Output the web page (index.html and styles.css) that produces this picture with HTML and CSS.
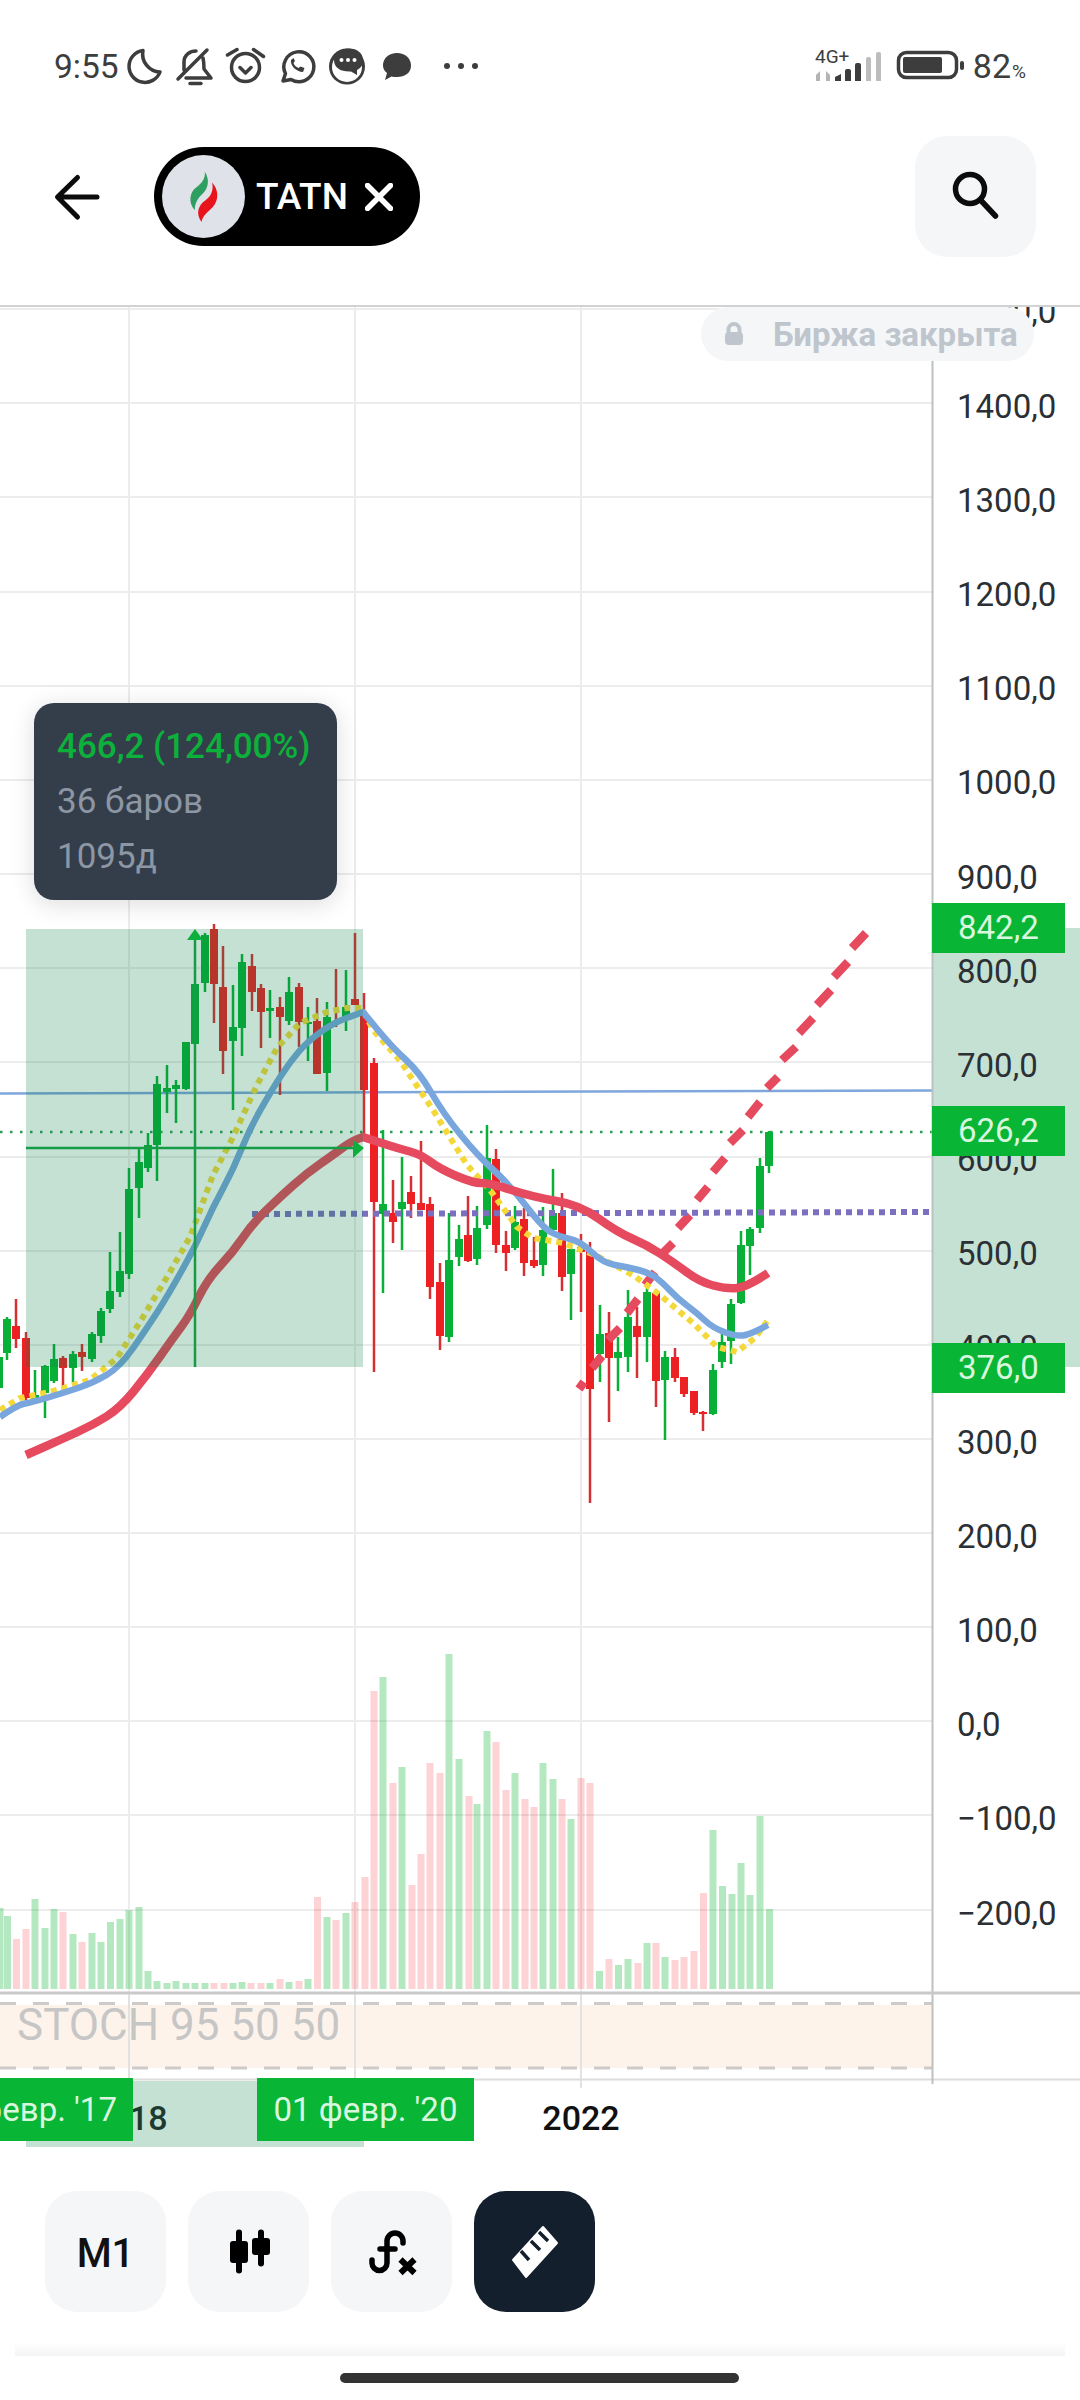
FILE: index.html
```html
<!DOCTYPE html>
<html lang="ru">
<head>
<meta charset="utf-8">
<title>TATN</title>
<link rel="stylesheet" href="styles.css">
</head>
<body>
<div class="status">
  <div class="status-left">
    <span class="time">9:55</span>
    <svg class="si si-moon" viewBox="120 44 50 44"><path class="ln" d="M143 50.500A16 16 0 1 0 160 72A18 18 0 0 1 143 50.500Z"/></svg>
    <svg class="si si-bell" viewBox="170 44 50 44"><path class="ln" d="M184 70V62C184 55 190 51 196 51M203 58C204 62 204 66 204 69L211 78H186M207 50L178 79M190 83.500H201"/></svg>
    <svg class="si si-alarm" viewBox="220 44 53 44"><circle class="ln" cx="245.500" cy="67.500" r="14"/><path class="ln" d="M227.500 55L237 49.500M253.500 49.500L263.500 56.500M240 67.500L245.500 73L251 67.500"/></svg>
    <svg class="si si-wa" viewBox="273 44 48 44"><path class="ln" d="M283 81L285.500 73.500A15 15 0 1 1 291 79.500Z"/><path class="fl" d="M291 60C290 65 296 72 303 72L304.500 68L300.500 66.500L298.500 68C296 67 294 65 293.500 63L295 61L293.500 58Z"/></svg>
    <svg class="si si-chat" viewBox="321 44 53 44"><circle class="fl" cx="347" cy="66.500" r="18"/><circle class="wh" cx="347" cy="67" r="15"/><path class="fl" d="M334 60C334 53 341 48.500 349 48.500C357 48.500 363 53 363 60C363 65 361 68 357 70L357 75L351 71.500C341 72 334 68 334 60Z"/><circle class="wh" cx="341.500" cy="60" r="2"/><circle class="wh" cx="348" cy="60" r="2"/><circle class="wh" cx="354.500" cy="60" r="2"/></svg>
    <svg class="si si-bubble" viewBox="374 44 54 44"><path class="fl" d="M397 53C405 53 411 58 411 65.500C411 73 405 77 397 77C395 77 393 77 391.500 76.500L385 80L387 73C384.500 71 383 68.500 383 65.500C383 58 389 53 397 53Z"/></svg>
    <svg class="si si-dots" viewBox="428 44 62 44"><circle class="fl" cx="447" cy="66" r="3"/><circle class="fl" cx="461" cy="66" r="3"/><circle class="fl" cx="475" cy="66" r="3"/></svg>
  </div>
  <div class="status-right">
    <svg class="si si-signal" viewBox="814 44 72 44">
      <text class="net" x="816" y="63">4G+</text>
      <path class="gr" d="M817 75L821 71V81H817ZM827 71L831 75L831 81H827Z"/>
      <path class="fl" d="M836 81V77L842 74V81ZM846 81V71Q846 69 848 69H850Q852 69 852 71V81ZM856 81V65Q856 63 858 63H860Q862 63 862 65V81Z"/>
      <path class="gr2" d="M867 81V59Q867 57 869 57H870Q872 57 872 59V81ZM877 81V54Q877 52 879 52H880Q882 52 882 54V81Z"/>
    </svg>
    <svg class="si si-batt" viewBox="896 44 72 44"><rect class="ln" x="899.500" y="52.500" width="58" height="25" rx="8"/><rect class="fl" x="904" y="57" width="39" height="16" rx="2"/><rect class="fl" x="961" y="61" width="4" height="9" rx="2"/></svg>
    <span class="pct">82<small>%</small></span>
  </div>
</div>

<header class="header">
  <svg class="back" viewBox="50 170 50 50"><path d="M97 195H58M77.500 175.500L57.500 195L77.500 215"/></svg>
  <div class="pill">
    <span class="logo">
      <svg viewBox="0 0 248 248"><path class="flame-g" d="M128 50C130 72 118 85 102 97C82 112 78 142 98 165C98 142 108 128 122 115C140 98 142 72 128 50Z"/><path class="flame-r" d="M150 82C154 105 148 122 130 135C108 150 100 175 118 200C122 178 140 168 152 155C170 135 170 105 150 82Z"/></svg>
    </span>
    <span class="ticker">TATN</span>
    <svg class="close" viewBox="0 0 28 28"><path d="M2.500 2.500L25.500 25.500M25.500 2.500L2.500 25.500"/></svg>
  </div>
  <button class="square search" type="button">
    <svg viewBox="915 136 121 121"><circle cx="970" cy="189" r="14.500"/><path d="M980.500 200L995.500 216"/></svg>
  </button>
</header>

<main class="chart">
  <svg class="plot" viewBox="0 305 1080 1842">
    <path class="grid" d="M0 309H932M0 403H932M0 497H932M0 592H932M0 686H932M0 780H932M0 874H932M0 968H932M0 1062H932M0 1157H932M0 1251H932M0 1345H932M0 1439H932M0 1533H932M0 1627H932M0 1721H932M0 1815H932M0 1910H932"/>
    <path class="grid" d="M129 305V2080M355 305V2080M581 305V2088"/>
    <rect class="stoch-band" x="0" y="2005" width="932" height="63"/>
    <path class="stoch-dash" d="M0 2003.500H932M0 2068H932"/>
    <path class="grid-v" d="M129 1995V2080M355 1995V2080M581 1995V2088"/>
    <path class="time-line" d="M0 2079.500H1080"/>
    <path class="vol-g" d="M0 1908V1989M7.500 1916V1989M35 1899V1989M45 1928V1989M54 1909V1989M73 1934V1989M92 1933V1989M101 1942V1989M110.500 1922V1989M120 1919V1989M129 1910V1989M139 1907V1989M148 1971V1989M157 1981V1989M167 1983V1989M176 1981V1989M186 1983V1989M195 1983V1989M205 1983V1989M233 1983V1989M242 1982V1989M270 1983V1989M289 1982V1989M308 1979V1989M327 1917V1989M346 1913V1989M383 1677V1989M402 1767V1989M449 1654V1989M459 1759V1989M477 1804V1989M487 1731V1989M515 1773V1989M543 1763V1989M553 1779V1989M571 1819V1989M599.500 1971V1989M618.500 1965V1989M628 1959V1989M647 1943V1989M665 1957V1989M713 1830V1989M722.500 1886V1989M732 1894V1989M741 1863V1989M750 1895V1989M760 1816V1989M769.500 1909V1989"/>
    <path class="vol-r" d="M16.500 1939V1989M26 1929V1989M63 1912V1989M82 1942V1989M214 1983V1989M224 1983V1989M251 1983V1989M261 1983V1989M280 1979V1989M299 1981V1989M317.500 1897V1989M336 1920V1989M355 1902V1989M365 1877V1989M374 1691V1989M393 1783V1989M412 1885V1989M421 1854V1989M430 1763V1989M440 1773V1989M469 1796V1989M496 1742V1989M506 1790V1989M525 1799V1989M534 1807V1989M562 1799V1989M581 1778V1989M590 1783V1989M609 1959V1989M638 1963V1989M656 1943V1989M675 1960V1989M684 1957V1989M694 1951V1989M703.500 1893V1989"/>
    <path class="price-line" d="M0 1093.500L932 1090.500"/>
    <path class="close-dots" d="M0 1132H932"/>
    <path class="wick-g" d="M7 1317V1360M35 1370V1400M45 1365V1418M54 1344V1383M73 1351V1382M92 1332V1362M101 1308V1343M110 1252V1313M120 1232V1297M129 1168V1279M139 1148V1218M148 1133V1172M157 1076V1181M167 1065V1113M176 1080V1123M186 1042V1090M205 933V992M233 985V1110M242 954V1056M270 990V1038M289 977V1025M308 1007V1061M327 1002V1091M346 970V1031M383 1130V1293M402 1157V1250M449 1213V1342M459 1225V1266M477 1206V1265M487 1125V1229M515 1206V1250M543 1207V1276M553 1169V1230M571 1245V1320M600 1305V1382M618 1337V1391M628 1290V1372M647 1287V1362M665 1351V1440M713 1364V1415M722 1328V1368M731 1299V1364M741 1231V1304M750 1227V1275M760 1158V1233M769 1131V1173"/>
    <path class="body-g" d="M-1 1357V1388M7 1319V1353M35 1395V1400M45 1366V1393M54 1359V1381M73 1354V1368M92 1334V1359M101 1311V1336M110 1291V1309M120 1271V1292M129 1189V1274M139 1162V1188M148 1145V1168M157 1084V1145M167 1088V1092M176 1085V1089M186 1042V1089M195 984V1044M205 935V983M233 1027V1041M242 962V1028M270 1008V1011M289 992V1021M308 1022V1024M327 1017V1073M346 1007V1017M383 1204V1214M402 1202V1209M449 1260V1337M459 1239V1257M477 1228V1259M487 1158V1225M515 1222V1248M543 1230V1265M553 1213V1230M571 1249V1274M600 1334V1354M618 1352V1358M628 1317V1357M647 1292V1337M665 1357V1380M713 1370V1414M722 1342V1362M731 1304V1341M741 1245V1303M750 1229V1246M760 1166V1228M769 1132V1166"/>
    <path class="wick-r" d="M16 1299V1348M26 1332V1400M63 1356V1390M82 1344V1371M214 924V1023M223 946V1074M252 954V1011M261 984V1048M280 997V1095M299 983V1047M317 998V1074M336 969V1027M355 933V1005M364 993V1137M374 1058V1372M393 1180V1243M411 1176V1218M421 1141V1210M430 1197V1299M440 1263V1350M468 1196V1262M496 1149V1253M506 1231V1271M524 1208V1276M534 1237V1268M562 1193V1291M581 1234V1312M590 1242V1503M609 1312V1422M637 1307V1378M656 1290V1407M675 1348V1382M684 1377V1397M694 1391V1415M703 1411V1431"/>
    <path class="body-r" d="M16 1326V1339M26 1338V1398M63 1358V1368M82 1352V1357M214 929V984M223 987V1051M252 966V992M261 988V1012M280 1007V1017M299 987V1022M317 1021V1074M355 999V1005M364 1013V1090M374 1063V1202M393 1213V1222M411 1192V1204M421 1203V1210M430 1204V1287M440 1282V1336M468 1235V1261M496 1159V1245M506 1245V1253M524 1219V1263M534 1260V1266M562 1213V1277M581 1247V1252M590 1250V1389M609 1333V1358M637 1326V1337M656 1293V1381M675 1357V1378M684 1377V1394M694 1391V1413M703 1412V1414"/>
    <path class="trend" d="M578 1383L585 1388M592 1368L602 1356M608 1340L620 1328M627 1313L638 1299M645 1285L655 1272M663 1253L673 1243M678 1228L690 1215M697 1200L708 1187M713 1172L725 1158M730 1143L743 1130M748 1117L760 1102M767 1088L778 1077M782 1060L796 1047M799 1033L813 1018M817 1005L831 990M834 977L848 962M852 948L866 933"/>
    <path class="level" d="M252 1214L930 1212"/>
    <path class="ma-y" d="M0 1410L20 1398L50 1392L90 1380L117 1358L140 1322L167 1277L190 1237L213 1175L233 1137L257 1085L277 1048L300 1023L327 1012L347 1008L362 1008L373 1030L397 1057L403 1065L433 1110L467 1165L490 1190L517 1227L533 1238L563 1243L595 1255L633 1275L660 1295L693 1323L717 1347L737 1352L755 1338L768 1320"/>
    <path class="ma-b" d="M0 1417Q17 1405 25 1403.500Q33 1402 48 1397.500Q63 1393 78 1388Q93 1383 106.500 1375Q120 1367 133.500 1347.500Q147 1328 157 1312.500Q167 1297 181 1272Q195 1247 204 1227Q213 1207 223 1188.500Q233 1170 241.500 1149Q250 1128 261.500 1108Q273 1088 281.500 1075Q290 1062 298.500 1052Q307 1042 320 1032.500Q333 1023 346.500 1018Q360 1013 363 1012L377.500 1029.500Q392 1047 406 1060Q420 1073 431.500 1093Q443 1113 460 1134Q477 1155 493.500 1170Q510 1185 526.500 1206.500Q543 1228 551.500 1232.500Q560 1237 570 1239Q580 1241 591.500 1252Q603 1263 615 1265Q627 1267 638.500 1270Q650 1273 656.500 1278Q663 1283 670 1290.500Q677 1298 687 1305.500Q697 1313 705 1320.500Q713 1328 725.500 1332.500Q738 1337 745.500 1335Q753 1333 768 1325"/>
    <path class="ma-r" d="M26 1455L43 1447.500Q60 1440 76.500 1432.500Q93 1425 106.500 1416.500Q120 1408 133.500 1391.500Q147 1375 160 1356.500Q173 1338 181.500 1326.500Q190 1315 198.500 1297.500Q207 1280 220 1266Q233 1252 243 1237.500Q253 1223 266.500 1210Q280 1197 293.500 1185Q307 1173 320 1164Q333 1155 343 1147.500Q353 1140 363 1137L381.500 1143Q400 1149 410 1151.500Q420 1154 430 1161.500Q440 1169 456.500 1176Q473 1183 481.500 1183Q490 1183 511.500 1190Q533 1197 556.500 1201Q580 1205 598.500 1218.500Q617 1232 632 1238.500Q647 1245 660 1253.500Q673 1262 686.500 1272Q700 1282 713.500 1285.500Q727 1289 737 1288Q747 1287 768 1273"/>
    <rect class="zone" x="26" y="929" width="337" height="438"/>
    <rect class="zone" x="932" y="928" width="148" height="439"/>
    <rect class="zone" x="26" y="2081" width="338" height="66"/>
    <path class="axis" d="M932.500 305V2084"/>
    <path class="sep" d="M0 1993H1080"/>
    <path class="meas" d="M26 1148H358M195 936V1367"/>
    <path class="meas-head" d="M353 1140L364 1148L353 1158ZM187 940L195 929L203 940Z"/>
  </svg>

  <div class="axis-labels">
    <span>1500,0</span><span>1400,0</span><span>1300,0</span><span>1200,0</span><span>1100,0</span><span>1000,0</span>
    <span>900,0</span><span>800,0</span><span>700,0</span><span>600,0</span><span>500,0</span><span>400,0</span>
    <span>300,0</span><span>200,0</span><span>100,0</span><span>0,0</span><span>−100,0</span><span>−200,0</span>
  </div>
  <span class="tag tag-high">842,2</span>
  <span class="tag tag-last">626,2</span>
  <span class="tag tag-low">376,0</span>

  <div class="closed">
    <svg viewBox="0 0 22 24"><path d="M5.500 11V7.500A5.500 5.500 0 0 1 16.500 7.500V11"/><rect x="2" y="10" width="18" height="13" rx="4"/></svg>
    <span>Биржа закрыта</span>
  </div>

  <div class="tip">
    <div class="tip-main">466,2 (124,00%)</div>
    <div>36 баров</div>
    <div>1095д</div>
  </div>

  <span class="stoch">STOCH 95 50 50</span>
  <span class="year year-18">2018</span>
  <span class="year year-22">2022</span>
  <span class="date date-from">01 февр. '17</span>
  <span class="date date-to">01 февр. '20</span>
</main>

<nav class="toolbar">
  <button class="square m1" type="button">M1</button>
  <button class="square" type="button">
    <svg viewBox="186 2191 121 121"><path class="c-wick" d="M237 2232.500V2270.500M259 2232.500V2263.500"/><rect class="c-body" x="228" y="2241" width="18" height="22" rx="3"/><rect class="c-body" x="250" y="2238" width="18" height="17" rx="3"/></svg>
  </button>
  <button class="square" type="button">
    <svg viewBox="329 2191 121 121"><path class="fx" d="M401 2243V2241A8 8 0 0 0 385 2241V2263A7.500 7.500 0 0 1 370 2263V2260M378 2249H393"/><path class="fx-x" d="M398.500 2259.500L412.500 2273M412.500 2259.500L398.500 2273"/></svg>
  </button>
  <button class="square active" type="button">
    <svg viewBox="473 2191 121 121"><path class="ruler" d="M512 2260L542 2227L556 2243L525 2277Z"/><path class="ruler-cut" d="M520 2251L528 2260M530 2241L539 2250M538 2232L547 2241"/></svg>
  </button>
</nav>

<footer class="bottom">
  <div class="fade"></div>
  <div class="home"></div>
</footer>
</body>
</html>
```
FILE: styles.css
```css
* { box-sizing: border-box; }
html, body { margin: 0; padding: 0; width: 1080px; height: 2400px; overflow: hidden; background: #fff; font-family: Roboto, "Noto Sans", sans-serif; color: #2b3035; }
svg { display: block; }

.status { height: 132px; padding: 0 54px; display: flex; align-items: center; justify-content: space-between; color: #3d3d3d; }
.status-left, .status-right { display: flex; align-items: center; }
.time { font-size: 33.5px; width: 66px; }
.si { height: 44px; }
.si-moon, .si-bell, .si-wa { width: 50px; }
.si-alarm, .si-chat { width: 53px; }
.si-wa { width: 48px; }
.si-bubble { width: 54px; }
.si-dots { width: 62px; }
.si-signal, .si-batt { width: 72px; }
.si-signal { margin-right: 10px; }
.si-batt { margin-right: 6px; }
.ln { fill: none; stroke: #3d3d3d; stroke-width: 3.5; stroke-linecap: round; stroke-linejoin: round; }
.fl { fill: #3d3d3d; }
.wh { fill: #fff; }
.gr { fill: #b4b4b4; }
.gr2 { fill: #bdbdbd; }
.net { font-size: 19px; fill: #3d3d3d; }
.pct { font-size: 34px; display: flex; align-items: baseline; }
.pct small { font-size: 19px; margin-left: 1px; }

.header { height: 173px; padding: 4px 44px 48px 55px; display: flex; align-items: center; box-shadow: 0 2px 0 #d2d2d2; position: relative; z-index: 2; background: #fff; }
.back { width: 50px; height: 50px; margin-left: -5px; }
.back path { fill: none; stroke: #0c0c0c; stroke-width: 5; stroke-linecap: round; stroke-linejoin: round; }
.pill { margin-left: 54px; width: 266px; height: 99px; border-radius: 50px; background: #000; padding-left: 8px; display: flex; align-items: center; color: #fff; }
.logo { width: 83px; height: 83px; border-radius: 50%; background: #dfe2e8; flex: none; }
.flame-g { fill: #2f9e61; }
.flame-r { fill: #e8141c; }
.ticker { font-size: 37px; font-weight: 500; margin-left: 11px; width: 109px; }
.close { width: 28px; height: 28px; }
.close path { fill: none; stroke: #fff; stroke-width: 5.5; stroke-linecap: round; }

.square { width: 121px; height: 121px; border-radius: 32px; border: 0; padding: 0; background: #f5f6f8; font: inherit; color: #111; flex: none; }
.square svg { width: 121px; height: 121px; }
.search { margin-left: auto; }
.search circle, .search path { fill: none; stroke: #0c0c0c; stroke-width: 5.5; stroke-linecap: round; }

.chart { position: relative; width: 1080px; height: 1842px; overflow: hidden; }
.plot { position: absolute; left: 0; top: 0; width: 1080px; height: 1842px; }
.grid, .grid-v { fill: none; stroke: #ececec; stroke-width: 2; }
.grid-v { stroke: #e2e2e2; }
.time-line { fill: none; stroke: #dcdcdc; stroke-width: 2; }
.stoch-band { fill: #fef3ea; }
.stoch-dash { fill: none; stroke: #cfcaca; stroke-width: 3; stroke-dasharray: 16 17; }
.vol-g { fill: none; stroke: rgb(5, 180, 45); stroke-opacity: .3; stroke-width: 7; }
.vol-r { fill: none; stroke: rgb(245, 35, 45); stroke-opacity: .2; stroke-width: 7; }
.price-line { fill: none; stroke: #7fa6dd; stroke-width: 2.5; }
.close-dots { fill: none; stroke: #2a9d55; stroke-width: 2.5; stroke-dasharray: 2.500 7.500; }
.wick-g { fill: none; stroke: #08b038; stroke-width: 2.5; }
.body-g { fill: none; stroke: #08b038; stroke-width: 8; }
.wick-r { fill: none; stroke: #d63034; stroke-width: 2.5; }
.body-r { fill: none; stroke: #ed2024; stroke-width: 8; }
.trend { fill: none; stroke: #e64a5e; stroke-width: 8.5; }
.level { fill: none; stroke: #7b6fc0; stroke-width: 6; stroke-dasharray: 6 5; }
.ma-y { fill: none; stroke: #f4d83a; stroke-width: 6; stroke-dasharray: 6 5; stroke-linejoin: round; }
.ma-b { fill: none; stroke: #78a6dd; stroke-width: 6.5; stroke-linejoin: round; }
.ma-r { fill: none; stroke: #e64a5e; stroke-width: 8.5; stroke-linejoin: round; }
.zone { fill: rgb(3, 125, 68); fill-opacity: .23; }
.axis { fill: none; stroke: #bcc2c0; stroke-width: 2; }
.sep { fill: none; stroke: #c9c9c9; stroke-width: 3; }
.meas { fill: none; stroke: #169c45; stroke-width: 2.5; }
.meas-head { fill: #0cae3c; }

.axis-labels { position: absolute; left: 957px; top: -39.6px; display: flex; flex-direction: column; font-size: 33px; color: #2b3035; }
.axis-labels span { height: 94.2px; line-height: 94.2px; }
.tag { position: absolute; left: 932px; width: 133px; height: 50px; background: #08b535; color: #d9f7df; font-size: 33px; line-height: 50px; padding-left: 26px; }
.tag-high { top: 598px; }
.tag-last { top: 801px; }
.tag-low { top: 1038px; }

.closed { position: absolute; left: 701px; top: 2px; width: 333px; height: 54px; border-radius: 27px; background: #f4f6f8; display: flex; align-items: center; padding-left: 22px; color: #bec5cc; font-size: 33px; font-weight: 700; white-space: nowrap; }
.closed svg { width: 22px; height: 24px; margin-right: 28px; flex: none; }
.closed path { fill: none; stroke: #bec5cc; stroke-width: 4; }
.closed rect { fill: #bec5cc; }

.tip { position: absolute; left: 34px; top: 398px; width: 303px; height: 197px; border-radius: 20px; background: #343e4b; box-shadow: 0 4px 24px rgba(0, 0, 0, .14); padding: 16px 0 0 23px; color: #8d96a3; font-size: 35px; line-height: 55px; }
.tip-main { color: #0cb13b; font-weight: 500; }

.stoch { position: absolute; left: 17px; top: 1695px; font-size: 44px; line-height: 50px; color: #c6c6c6; }
.year { position: absolute; top: 1793px; width: 80px; text-align: center; font-size: 34px; line-height: 40px; font-weight: 500; color: #111; }
.year-18 { left: 89px; color: #1c3a30; }
.year-22 { left: 541px; }
.date { position: absolute; top: 1773px; height: 63px; background: #08b535; color: #d9f7df; font-size: 33px; line-height: 64px; text-align: center; white-space: nowrap; }
.date-from { left: -83px; width: 216px; }
.date-to { left: 257px; width: 217px; }

.toolbar { display: flex; gap: 22px; padding-left: 45px; margin-top: 44px; }
.square.m1 { font-size: 40px; font-weight: 500; padding-top: 3px; }
.square.active { background: #141f2e; }
.c-wick { fill: none; stroke: #000; stroke-width: 6; stroke-linecap: round; }
.c-body { fill: #000; }
.fx { fill: none; stroke: #000; stroke-width: 5.5; stroke-linecap: round; }
.fx-x { fill: none; stroke: #000; stroke-width: 6; }
.ruler { fill: #fff; stroke: #fff; stroke-width: 2; stroke-linejoin: round; }
.ruler-cut { fill: none; stroke: #141f2e; stroke-width: 3.5; }

.bottom { padding-top: 30px; }
.fade { height: 14px; margin: 0 15px; background: linear-gradient(#fff, #f4f4f4); }
.home { width: 399px; height: 10px; margin: 17px 0 0 340px; border-radius: 5px; background: #333; }
```
